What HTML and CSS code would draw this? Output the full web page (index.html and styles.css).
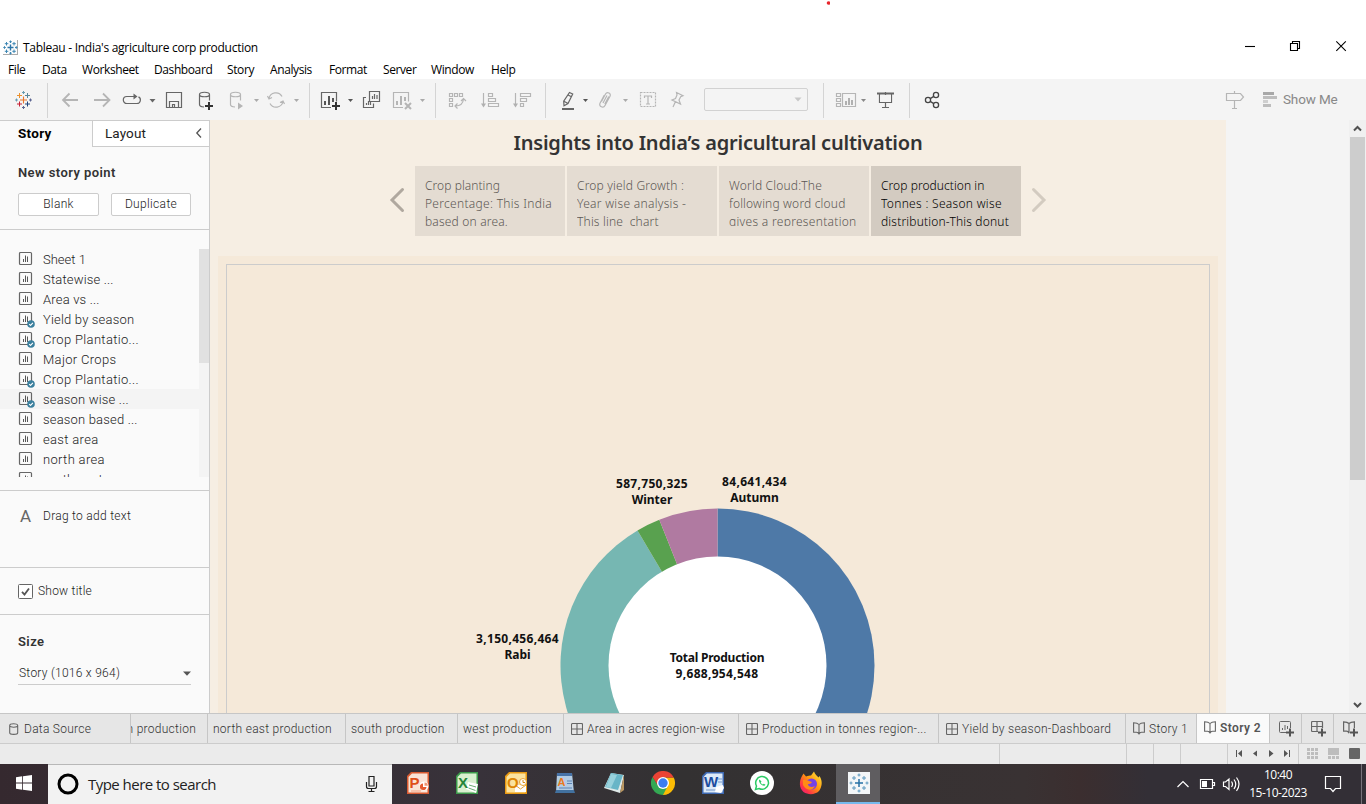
FILE: index.html
```html
<!DOCTYPE html>
<html lang="en">
<head>
<meta charset="utf-8">
<title>Tableau - India's agriculture corp production</title>
<link rel="stylesheet" href="styles.css">
</head>
<body>
<svg class="defs" width="0" height="0" aria-hidden="true">
  <defs>
    <symbol id="sheet" viewBox="0 0 16 16"><rect x="1.5" y="1.5" width="12" height="12" rx="1" fill="none" stroke="#666" stroke-width="1.2"/><path d="M5.500 11V8M7.500 11V4.500M9.500 11V5.500" stroke="#555"/></symbol>
    <symbol id="check" viewBox="0 0 8 8"><circle cx="4" cy="4" r="3.8" fill="#3a7f9d"/><path d="M2.200 4.100 3.500 5.400 5.900 2.800" fill="none" stroke="#fff" stroke-width="1.100"/></symbol>
    <symbol id="grid" viewBox="0 0 12 12"><path d="M1.500.5h9a1 1 0 0 1 1 1v9a1 1 0 0 1-1 1h-9a1 1 0 0 1-1-1v-9a1 1 0 0 1 1-1ZM6 .5v11M.5 6h11" fill="none" stroke="#666" stroke-width="1.100"/></symbol>
    <symbol id="book" viewBox="0 0 12 13"><path d="M6 2.500v10M6 2.500C4.800 1.200 3 .8.600.800v9.400H3.500C4.800 10.200 5.600 11 6 12.200M6 2.500C7.200 1.200 9 .8 11.400.800v9.400H8.500C7.200 10.200 6.400 11 6 12.200" fill="none" stroke="#666" stroke-width="1.100"/></symbol>
  </defs>
</svg>
<div class="app">
  <div class="blank"><svg class="dot" viewBox="0 0 4 4"><circle cx="2.500" cy="2" r="1.800" fill="#e8262c"/></svg></div>
  <header class="titlebar">
    <svg class="w23" viewBox="0 38 23 20"><rect x="3" y="40" width="15" height="15" fill="#fdfdfd"/><path d="M17.500 40v15M3 54.500h15" stroke="#aaa"/><path d="M10.500 44.500v6M7.500 47.500h6" stroke="#2c75a8" stroke-width="1.400"/><path d="M6.500 42v3.500M4.800 43.700h3.500M14 42v3.500M12.300 43.700h3.500M6.500 49.500V53M4.800 51.300h3.500M14 49.500V53M12.300 51.300h3.500M10.500 40.500v2.500M9.300 41.700h2.500M10.500 52v2.500M9.300 53.200h2.500M4.500 46.200v2.600M3.300 47.500h2.500M16.300 46.200v2.600M15 47.500h2.500" stroke="#3c86b3"/></svg>
    <span class="title-text">Tableau - India's agriculture corp production</span>
    <svg class="winbtns" viewBox="1226 38 140 20"><g fill="none" stroke="#000" stroke-width="1.100"><path d="M1245 46.500h10"/><path d="M1290.500 43.500h7v7h-7zM1292.500 43.500v-2h7v7h-2"/><path d="M1336.300 41.300l9.500 9.500M1345.800 41.300l-9.500 9.500"/></g></svg>
  </header>
  <nav class="menu">
    <span class="m1">File</span><span class="m2">Data</span><span class="m3">Worksheet</span><span class="m4">Dashboard</span><span class="m5">Story</span><span class="m6">Analysis</span><span class="m7">Format</span><span class="m8">Server</span><span class="m9">Window</span><span class="m10">Help</span>
  </nav>
  <div class="toolbar">
    <svg class="w48" viewBox="0 79 48 41"><path d="M23.500 96.500v7M20 100h7" stroke="#e8762d" stroke-width="1.100"/><path d="M27.500 93v5M25 95.500h5" stroke="#59879b"/><path d="M19.500 93v5M17 95.500h5" stroke="#eb912c"/><path d="M19.500 101.500v5M17 104h5" stroke="#c72035"/><path d="M27.500 101.500v5M25 104h5" stroke="#1f457e"/><path d="M23.500 91v3M22 92.500h3M16.500 98.500v3M15 100h3" stroke="#6a9db0"/><path d="M23.500 106v3M22 107.500h3M30.500 98.500v3M29 100h3" stroke="#5b6591"/><path d="M47.500 83v35" stroke="#d4d4d4"/></svg>
    <svg class="w38" viewBox="48 79 38 41"><path d="M78 100H63M69.500 93.500 63 100l6.500 6.500" class="off thick"/></svg>
    <svg class="w32" viewBox="86 79 32 41"><path d="M94 100h15.500M103 93.500l6.500 6.500-6.500 6.500" class="off thick"/></svg>
    <svg class="w42" viewBox="118 79 42 41"><path d="M130 103.500h-3.200a3.500 3.500 0 0 1 0-7H136M135 103.500h2a3.500 3.500 0 0 0 1.500-6.600M128 103.500h9" class="on"/><path d="M133.500 93.500v6l4-3z" fill="#666"/><path d="M149.500 99h6l-3 3.500z" fill="#666"/></svg>
    <svg class="w30" viewBox="160 79 30 41"><path d="M166.500 92.500h15v15h-15zM169.500 107.500v-6h9v6M172.500 107.500v-3h2v3" class="on"/></svg>
    <svg class="w32" viewBox="190 79 32 41"><path d="M199.500 94.500v10c0 1.500 2 2.400 4.500 2.500M209.500 94.500v6M199.500 94.500c0-3 10-3 10 0s-10 3-10 0" class="on"/><path d="M209 102v8M205 106h8" stroke="#333" stroke-width="2"/></svg>
    <svg class="w42" viewBox="222 79 42 41"><path d="M230.500 94.500v10c0 1.500 2 2.400 4.500 2.500M240.500 94.500v6M230.500 94.500c0-3 10-3 10 0s-10 3-10 0" class="off"/><path d="M238 102.500v7l5-3.500z" fill="#b5b5b5"/><path d="M254 99h5l-2.500 3z" fill="#aaa"/></svg>
    <svg class="w46" viewBox="264 79 46 41"><path d="M269 98.500a7 7 0 0 1 13-2M283 101.500a7 7 0 0 1-13 2M267.500 96l1.500 3 3-1.500M284.500 104l-1.500-3-3 1.500" class="off"/><path d="M294 99h5l-2.500 3z" fill="#aaa"/><path d="M309.500 83v35" stroke="#d4d4d4"/></svg>
    <svg class="w48" viewBox="310 79 48 41"><path d="M331 107.500h-9.500v-15h15v9" class="on"/><path d="M325 105v-4M329 105v-9M333 102v-4" stroke="#555" stroke-width="2"/><path d="M336 102v8M332 106h8" stroke="#333" stroke-width="2"/><path d="M348 99h5l-2.500 3z" fill="#555"/></svg>
    <svg class="w30" viewBox="358 79 30 41"><path d="M369.500 91.500h10v10h-10zM366 97.500h-2.500v10h10v-4M372.500 99v-3M374.500 99v-5M377 99v-4M366.500 105v-2M368.500 105v-4M370.500 105v-3" class="on"/></svg>
    <svg class="w48" viewBox="388 79 48 41"><path d="M403 107.500h-9.500v-15h15v9" class="off"/><path d="M397 105v-4M401 105v-9M405 101v-4M405 103l6 6M411 103l-6 6" stroke="#b5b5b5" stroke-width="2"/><path d="M420 99h5l-2.500 3z" fill="#aaa"/><path d="M435.500 83v35" stroke="#d4d4d4"/></svg>
    <svg class="w38" viewBox="436 79 38 41"><path d="M449.500 93.500h3v3h-3zM454.500 93.500h3v3h-3zM459.500 93.500h3v3h-3zM449.500 98.500h3v3h-3zM449.500 103.500h3v3h-3zM455.500 106c5 0 7.500-2 8-7M461 101l2.500-2.500 2.500 2.500M457.500 103.500 455 106l2.500 2.500" class="off"/></svg>
    <svg class="w34" viewBox="474 79 34 41"><path d="M483.500 93v13M488.500 93.500h4v3h-4zM488.500 98.500h7v3h-7zM488.500 103.500h10v3h-10z" class="off"/><path d="M481 103.500h5l-2.500 4z" fill="#b0b0b0"/></svg>
    <svg class="w38" viewBox="508 79 38 41"><path d="M515.500 93v13M520.500 93.500h10v3h-10zM520.500 98.500h6v3h-6zM520.500 103.500h3v3h-3z" class="off"/><path d="M513 103.500h5l-2.500 4z" fill="#b0b0b0"/><path d="M545.500 83v35" stroke="#d4d4d4"/></svg>
    <svg class="w48" viewBox="546 79 48 41"><path d="M569.500 92.500l3.200 1.500-4.700 9.500-4 2.200-.3-4.500zM563.800 101.200l3.900 2M568 95l3.500 1.800" class="on"/><path d="M562 109h12" stroke="#666" stroke-width="2"/><path d="M583 99h5l-2.500 3z" fill="#555"/></svg>
    <svg class="w40" viewBox="594 79 40 41"><path d="M601.500 101.500l4-7.500c1.500-2.500 6-1 4.500 2.200l-5 9.300c-1.600 3-6.500 1-5-2.200l4.200-8M603 103l4-7.500M604.800 104l4-7.500" class="off"/><path d="M623 99h5l-2.500 3z" fill="#aaa"/></svg>
    <svg class="w30" viewBox="634 79 30 41"><rect x="640.500" y="92.500" width="15" height="14" class="off" stroke-dasharray="2 1"/><path d="M644.500 98v-2h7v2M648 96v8M646 104h4" class="off"/></svg>
    <svg class="w40" viewBox="664 79 40 41"><path d="M676.500 92.500l6.500 3.200-2.300 1-1.700 3.300 1.500 4-8.500-4 3.500-1.500 1.500-3.500zM675.500 101.500l-2.500 5.500" class="off"/></svg>
    <div class="combo"><svg viewBox="0 0 8 5" width="8" height="5"><path d="M.500.500h7L4 4.500z" fill="#c8c8c8"/></svg></div>
    <svg class="w64" viewBox="808 79 64 41"><path d="M823.500 83v35" stroke="#d4d4d4"/><path d="M836.500 93.500h4v3h-4zM836.500 98.500h4v3h-4zM836.500 103.500h4v3h-4zM842.500 93.500h13v13h-13z" class="off"/><path d="M846 105v-4M849 105v-7M852 105v-5" stroke="#b0b0b0" stroke-width="2"/><path d="M861 99h5l-2.500 3z" fill="#888"/></svg>
    <svg class="w38" viewBox="872 79 38 41"><path d="M877 93.500h17" stroke="#666" stroke-width="2"/><path d="M879.500 94v8.500h12V94M885.500 92v16M882 107.500h7" class="on"/><path d="M880 95h11v7h-11z" fill="#f4f4f4"/><path d="M909.500 83v35" stroke="#d4d4d4"/></svg>
    <svg class="w48" viewBox="910 79 48 41"><g fill="none" stroke="#444" stroke-width="1.300"><circle cx="928" cy="100" r="2.600"/><circle cx="936" cy="95" r="2.600"/><circle cx="936" cy="105" r="2.600"/><path d="M930.200 98.600l3.600-2.200M930.200 101.400l3.600 2.200"/></g></svg>
    <svg class="guide" viewBox="1220 79 62 41"><path d="M1226.500 93.500h14l3 3.500-3 3.500h-14zM1234.500 91v2M1234.500 100.500v8M1232 108.500h5" class="off"/><path d="M1263 92h11v3h-11z" fill="#a8a8a8"/><path d="M1263 96h14v3h-14z" fill="#bdbdbd"/><path d="M1263 100h5v3h-5z" fill="#cfcfcf"/><path d="M1263 104h8v3h-8z" fill="#bdbdbd"/></svg>
    <span class="showme">Show Me</span>
  </div>
  <main class="work">
    <aside class="side">
      <div class="sidetabs"><div class="stab active"><span>Story</span></div><div class="stab other"><span>Layout</span><svg width="8" height="11" viewBox="0 0 8 11"><path d="M6 .500 1.800 5 6 9.500" fill="none" stroke="#555" stroke-width="1.300"/></svg></div></div>
      <section class="newpoint"><h2>New story point</h2><div class="btns"><span class="btn">Blank</span><span class="btn dup">Duplicate</span></div></section>
      <section class="sheets">
        <ul>
          <li><i><svg width="16" height="16"><use href="#sheet"/></svg></i><span class="tight">Sheet 1</span></li>
          <li><i><svg width="16" height="16"><use href="#sheet"/></svg></i><span>Statewise ...</span></li>
          <li><i><svg width="16" height="16"><use href="#sheet"/></svg></i><span>Area vs ...</span></li>
          <li><i><svg width="16" height="16"><use href="#sheet"/></svg><svg class="badge"><use href="#check"/></svg></i><span>Yield by season</span></li>
          <li><i><svg width="16" height="16"><use href="#sheet"/></svg><svg class="badge"><use href="#check"/></svg></i><span class="wide">Crop Plantatio...</span></li>
          <li><i><svg width="16" height="16"><use href="#sheet"/></svg></i><span class="wide">Major Crops</span></li>
          <li><i><svg width="16" height="16"><use href="#sheet"/></svg><svg class="badge"><use href="#check"/></svg></i><span class="wide">Crop Plantatio...</span></li>
          <li class="hl"><i><svg width="16" height="16"><use href="#sheet"/></svg><svg class="badge"><use href="#check"/></svg></i><span>season wise ...</span></li>
          <li><i><svg width="16" height="16"><use href="#sheet"/></svg></i><span>season based ...</span></li>
          <li><i><svg width="16" height="16"><use href="#sheet"/></svg></i><span class="wide">east area</span></li>
          <li><i><svg width="16" height="16"><use href="#sheet"/></svg></i><span class="wide">north area</span></li>
          <li><i><svg width="16" height="16"><use href="#sheet"/></svg></i><span>north east</span></li>
        </ul>
        <div class="track"><div class="thumb"></div></div>
      </section>
      <section class="drag"><b>A</b><span>Drag to add text</span></section>
      <section class="showtitle"><svg width="15" height="15" viewBox="0 0 15 15"><rect x=".5" y=".5" width="14" height="14" rx="1" fill="#fff" stroke="#666"/><path d="M4 7.800 6.500 10.500 11 4.500" fill="none" stroke="#555" stroke-width="1.800"/></svg><span>Show title</span></section>
      <section class="size"><h2>Size</h2><div class="select"><span>Story (1016 x 964)</span><svg width="8" height="5" viewBox="0 0 8 5"><path d="M0 .500h8L4 4.800z" fill="#555"/></svg></div></section>
    </aside>
    <div class="story">
      <h1>Insights into India’s agricultural cultivation</h1>
      <div class="points">
        <svg class="arrow" width="16" height="26" viewBox="0 0 16 26"><path d="M13.500 2.500 3 13l10.500 10.500" fill="none" stroke="#b0a89f" stroke-width="3" stroke-linecap="round"/></svg>
        <div class="card"><p><span class="s1">Crop planting</span><br><span class="s3">Percentage: This India</span><br><span class="s2">based on area.</span></p></div>
        <div class="card"><p><span class="s2">Crop yield Growth :</span><br><span class="s3">Year wise analysis -</span><br><span class="s2">This line&nbsp; chart</span></p></div>
        <div class="card"><p><span class="s2">World Cloud:The</span><br><span class="s2">following word cloud</span><br><span class="s3">gives a representation</span></p></div>
        <div class="card current"><p><span class="s1">Crop production in</span><br><span class="s3">Tonnes : Season wise</span><br><span class="s2">distribution-This donut</span></p></div>
        <svg class="arrow" width="16" height="26" viewBox="0 0 16 26"><path d="M2.500 2.500 13 13 2.500 23.500" fill="none" stroke="#d3cbc0" stroke-width="3" stroke-linecap="round"/></svg>
      </div>
      <div class="dash"><div class="view">
        <svg class="chart" viewBox="227 265 982 448">
          <path d="M717.500 508.500a157 157 0 0 1 0 314z" fill="#4e79a7"/>
          <path d="M717.500 665.500V822.500A157 157 0 0 1 637.500 530.400z" fill="#76b7b2"/>
          <path d="M717.500 665.500 637.500 530.400A157 157 0 0 1 659.300 519.700z" fill="#59a14f"/>
          <path d="M717.500 665.500 659.300 519.700A157 157 0 0 1 717.500 508.500z" fill="#b07aa1"/>
          <circle cx="717.500" cy="665.500" r="109" fill="#fff"/>
          <g class="labels"><text x="652" y="488" class="num">587,750,325</text><text x="652" y="504">Winter</text><text x="754.500" y="486" class="num">84,641,434</text><text x="754.500" y="502">Autumn</text><text x="517.500" y="643" class="num">3,150,456,464</text><text x="517.500" y="659">Rabi</text><text x="717" y="662" class="total">Total Production</text><text x="717" y="678" class="num">9,688,954,548</text></g>
        </svg>
      </div></div>
    </div>
    <div class="gutter"></div>
    <div class="vscroll"><svg width="17" height="17" viewBox="0 0 17 17"><path d="M5 10.500 8.500 7l3.500 3.500" fill="none" stroke="#505050" stroke-width="2"/></svg><div class="vthumb"></div><svg class="down" width="17" height="17" viewBox="0 0 17 17"><path d="M5 7l3.500 3.500L12 7" fill="none" stroke="#505050" stroke-width="2"/></svg></div>
  </main>
  <nav class="tabs">
    <div class="tab x1"><svg width="10" height="12" viewBox="0 0 10 12"><path d="M.700 2.500v7.200c0 2.200 8 2.200 8 0V2.500c0-2.400-8-2.400-8 0s8 2.200 8 0" fill="none" stroke="#666" stroke-width="1.100"/></svg><span>Data Source</span></div>
    <div class="tab x2"><span>north production</span></div>
    <div class="tab x3"><span>north east production</span></div>
    <div class="tab x4"><span>south production</span></div>
    <div class="tab x5"><span>west production</span></div>
    <div class="tab x6"><svg width="12" height="12"><use href="#grid"/></svg><span>Area in acres region-wise</span></div>
    <div class="tab x7"><svg width="12" height="12"><use href="#grid"/></svg><span>Production in tonnes region-...</span></div>
    <div class="tab x8"><svg width="12" height="12"><use href="#grid"/></svg><span>Yield by season-Dashboard</span></div>
    <div class="tab x9"><svg width="12" height="13"><use href="#book"/></svg><span>Story 1</span></div>
    <div class="tab x10"><svg width="12" height="13"><use href="#book"/></svg><span>Story 2</span></div>
    <div class="tab add"><svg width="16" height="16" viewBox="0 0 16 16"><path d="M8 11.500H1.500a1 1 0 0 1-1-1v-9a1 1 0 0 1 1-1h9a1 1 0 0 1 1 1V7M3.500 9V7M6 9V4M8.500 8V5" fill="none" stroke="#666"/><path d="M11 7.500v8M7 11.500h8" stroke="#555" stroke-width="2"/></svg></div>
    <div class="tab add"><svg width="16" height="16" viewBox="0 0 16 16"><path d="M7 10.500H1.500a1 1 0 0 1-1-1v-8a1 1 0 0 1 1-1h9a1 1 0 0 1 1 1V7M6 .5v10M.5 5.500h11" fill="none" stroke="#666" stroke-width="1.200"/><path d="M11 7.500v8M7 11.500h8" stroke="#555" stroke-width="2"/></svg></div>
    <div class="tab add last"><svg width="16" height="16" viewBox="0 0 16 16"><path d="M6 2.500v9.500M6 2.500C4.800 1.200 3 .8.600.800v9.400H3.500C4.800 10.200 5.600 11 6 12.200M6 2.500C7.200 1.200 9 .8 11.400.800V7" fill="none" stroke="#666" stroke-width="1.200"/><path d="M11 7.500v8M7 11.500h8" stroke="#555" stroke-width="2"/></svg></div>
  </nav>
  <div class="status">
    <svg class="statusicons" viewBox="996 744 370 20"><path d="M999.500 744v20M1126.500 744v20M1153.500 744v20M1180.500 744v20M1227.500 744v20M1298.500 744v20" stroke="#ccc"/><g fill="#555"><path d="M1236 750h1v7h-1zM1242 750v7l-4-3.500zM1257 750.500v6l-4-3zM1269 750v7l4.500-3.500zM1284 750v7l4-3.500zM1289 750h1v7h-1z"/></g><g fill="#bdbdbd"><path d="M1307 748h3v3h-3zM1311 748h3v3h-3zM1315 748h3v3h-3zM1307 752h3v3h-3zM1311 752h3v3h-3zM1315 752h3v3h-3zM1307 756h3v3h-3zM1311 756h3v3h-3zM1315 756h3v3h-3zM1328 748h11v7h-11zM1328 756h3v3h-3zM1332 756h3v3h-3zM1336 756h3v3h-3z"/></g><rect x="1349" y="748" width="11" height="11" rx="1" fill="#666"/></svg>
  </div>
  <footer class="taskbar">
    <svg class="w48" viewBox="0 764 48 40"><path d="M16 777.200 22.200 776.300V782.500H16zM23 776.200 32 775V782.500H23zM16 783.400H22.200V789.700L16 788.800zM23 783.400H32V791L23 789.800z" fill="#fff"/></svg>
    <div class="search">
      <svg class="w40" viewBox="48 764 40 40"><circle cx="68" cy="784" r="9" fill="none" stroke="#000" stroke-width="3"/></svg><span class="query">Type here to search</span>
      <svg class="mic" viewBox="364 764 16 40"><path d="M369 776.500h5v9.500h-5zM366.500 782v4.500a2 2 0 0 0 2 2h6a2 2 0 0 0 2-2V782M371.500 788.500v3M368.500 791.500h6" fill="none" stroke="#222" stroke-width="1.200"/></svg>
    </div>
    <div class="apps">
      <svg viewBox="0 0 24 24"><path d="M1 5 5 1h18v22H1z" fill="#d95a31"/><path d="M2.500 6 6 2.500h15.500v19h-19z" fill="#fae3d6"/><circle cx="18" cy="15" r="4.500" fill="#fff"/><path d="M17 12.500a3.300 3.300 0 1 0 3.500 3.500H17z" fill="#e55b31"/><path d="M18.500 11.500a3.300 3.300 0 0 1 3.300 3.300h-3.300z" fill="#f09472"/><path d="M5 20h10" stroke="#f0a184"/><text x="3.500" y="16.500" class="glyph" fill="#df4f19">P</text></svg>
      <svg viewBox="0 0 24 24"><path d="M1 5 5 1h18v22H1z" fill="#3c9a4b"/><path d="M2.500 6 6 2.500h15.500v19h-19z" fill="#d9f0cf"/><path d="M13 11l10 2-2 9-10-4z" fill="#fff"/><path d="M14 14l7 2M13.500 17l7 2.500" stroke="#69ac72"/><text x="3" y="16.500" class="glyph" fill="#26853a">X</text></svg>
      <svg viewBox="0 0 24 24"><path d="M1 5 5 1h18v22H1z" fill="#e99a13"/><path d="M2.500 6 6 2.500h15.500v19h-19z" fill="#fbe3a0"/><path d="M11 14h11v7H11z" fill="#fff"/><path d="M11 14l5.500 4 5.500-4" fill="none" stroke="#e9a633"/><circle cx="19" cy="11" r="3.500" fill="#fff" stroke="#e9a633"/><path d="M19 9v2.500h2" fill="none" stroke="#d68d17"/><text x="3" y="16.500" class="glyph" fill="#de8705">O</text></svg>
      <svg viewBox="0 0 24 24"><path d="M4 2h15l2 20H3z" fill="#b3cce4"/><path d="M4 2h15v3H4z" fill="#4773a8"/><path d="M3 19h18l1 3H2z" fill="#42719f"/><path d="M14 10h5M14 12.500h5M6 17h13" stroke="#5c83b5"/><text x="4.500" y="15" class="small" fill="#e97920">A</text></svg>
      <svg viewBox="0 0 24 24"><path d="M9 2l13 2-4 18L2 17z" fill="#dfe9e8"/><path d="M9 2l12 2-5 15L3 16z" fill="#68b5c7"/><path d="M9 3l6 1-6 13-5-1z" fill="#98d1dc"/><path d="M22 4v15l-4 3z" fill="#b99762"/></svg>
      <svg viewBox="0 0 24 24"><path d="M12 12V6.500h10.700A12 12 0 0 1 12 24z" fill="#fbbc05"/><path d="M1.600 6A12 12 0 0 0 12 24l4.800-9.200L7 14.500z" fill="#34a853"/><path d="M1.600 6A12 12 0 0 1 22.700 6.500H12L7 14.500z" fill="#ea4335"/><circle cx="12" cy="12" r="6" fill="#fff"/><circle cx="12" cy="12" r="4.700" fill="#3a7df0"/></svg>
      <svg viewBox="0 0 24 24"><path d="M1 5 5 1h18v22H1z" fill="#3d68b2"/><path d="M2.500 6 6 2.500h15.500v19h-19z" fill="#dceaf8"/><path d="M17 8h4M17 11h4M5 19h11" stroke="#7596c9"/><path d="M15 16l7-2 1 3-3 5-6-1z" fill="#fff"/><text x="3" y="15.500" class="glyph" fill="#1c4d9f">W</text></svg>
      <svg viewBox="0 0 24 24"><circle cx="12" cy="12" r="12" fill="#fff"/><path d="M5.500 18.500l1-3.500a6.400 6.400 0 1 1 2.500 2.500z" fill="none" stroke="#2ccb65" stroke-width="1.500"/><path d="M9.500 8.500c-1.500 1.500.5 4 2 5.200 1.500 1.200 3.500 1.500 4 0l-1.700-1-1 .9c-1-.4-1.700-1.100-2.100-2.100l.8-.9z" fill="#2ccb65"/></svg>
      <svg viewBox="0 0 24 24"><defs><linearGradient id="fx" x1="1" y1="0" x2="0" y2="1"><stop offset="0" stop-color="#fff044"/><stop offset=".45" stop-color="#ff980e"/><stop offset=".75" stop-color="#ff3647"/><stop offset="1" stop-color="#e31587"/></linearGradient></defs><path d="M3 5l1.500-2.500L7 5.500C9 4.500 11 4.500 12 4.500L15 .5c1 3 3 4 4.500 6L20.500 5C24 10 23 16 20 20c-4 4-11 4-15.500 1C0 17 0 10 3 5z" fill="url(#fx)"/><circle cx="12.500" cy="13" r="5.500" fill="#7542e5"/><path d="M4 9c3-1 5 1 9 2-1 2-3 2-4 2 0 3 4 4 7 2-2 5-9 5-12-1z" fill="#ff8b16"/></svg>
      <div class="current-app"><svg viewBox="0 0 24 24"><path d="M1 1h22v22H1z" fill="#f3f6f8"/><path d="M12 8v8M8 12h8" stroke="#2670a5" stroke-width="1.500"/><path d="M7 5v4M5 7h4M17 5v4M15 7h4M7 15v4M5 17h4M17 15v4M15 17h4M12 2.500v3M10.500 4h3M12 18.500v3M10.500 20h3M4 10.500v3M2.500 12h3M20 10.500v3M18.500 12h3" stroke="#5d98be"/></svg></div>
    </div>
    <div class="tray">
      <svg viewBox="1170 764 72 40" class="w72"><g fill="none" stroke="#fff" stroke-width="1.200"><path d="M1177.500 787l5.500-5.500 5.500 5.500"/><path d="M1200.500 779.500h12v9h-12z"/><path d="M1213 782.500h1.500v3h-1.500"/><path d="M1223.500 782v4.500h2l3.500 3v-10.500l-3.500 3zM1231.500 781.500q2 2.700 0 5.500M1234 779.500q3.500 4.700 0 9.500M1236.500 777.500q5 6.500 0 13.500"/></g><path d="M1202 781h5v6h-5z" fill="#fff"/></svg>
      <div class="clock"><span>10:40</span><span>15-10-2023</span></div>
      <svg viewBox="1314 764 52 40" class="w52"><path d="M1325.500 776.500h15v12h-5l-2.500 3-2.500-3h-5z" fill="none" stroke="#fff" stroke-width="1.200"/><path d="M1361.500 764v40" stroke="#77727a"/></svg>
    </div>
  </footer>
</div>
</body>
</html>
```
FILE: styles.css
```css
* { box-sizing: border-box; }
body { margin: 0; background: #fff; font-family: "Open Sans", "Noto Sans", sans-serif; color: #333; }
svg { display: block; flex: none; }
h1, h2, p, ul { margin: 0; padding: 0; font-size: inherit; }
.defs { position: absolute; }
.app { width: 1366px; height: 804px; display: flex; flex-direction: column; overflow: hidden; }
.blank { height: 38px; padding: 1px 0 0 826px; }
.dot { width: 4px; height: 4px; }
.titlebar { height: 20px; display: flex; align-items: center; font-size: 12px; color: #000; }
.title-text { letter-spacing: -0.28px; padding-bottom: 1px; }
.w23 { width: 23px; height: 20px; }
.winbtns { width: 140px; height: 20px; margin-left: auto; }
.menu { height: 21px; display: flex; align-items: center; padding: 2px 0 0 8px; font-size: 12px; letter-spacing: -0.4px; color: #000; }
.m1 { width: 34px; } .m2 { width: 40px; } .m3 { width: 72px; } .m4 { width: 73px; } .m5 { width: 43px; }
.m6 { width: 59px; } .m7 { width: 54px; } .m8 { width: 48px; } .m9 { width: 60px; } .m10 { width: 30px; }

.toolbar { height: 41px; background: #f4f4f4; display: flex; align-items: center; }
.toolbar svg { height: 41px; }
.on { fill: none; stroke: #666; stroke-width: 1.2; }
.off { fill: none; stroke: #b5b5b5; stroke-width: 1.2; }
.thick { stroke-width: 1.8; }
.w30 { width: 30px; } .w32 { width: 32px; } .w34 { width: 34px; } .w38 { width: 38px; }
.w40 { width: 40px; } .w42 { width: 42px; } .w46 { width: 46px; } .w48 { width: 48px; }
.w52 { width: 52px; } .w64 { width: 64px; } .w72 { width: 72px; }
.combo { width: 104px; height: 23px; border: 1px solid #d2d2d2; border-radius: 2px; display: flex; align-items: center; justify-content: flex-end; padding-right: 5px; }
.toolbar .combo svg { height: 5px; }
.guide { width: 62px; margin-left: auto; }
.showme { width: 84px; padding: 0 0 1px 1px; font: 13.5px Roboto, sans-serif; letter-spacing: -0.15px; color: #888; }

.work { height: 593px; display: flex; background: #f4f4f4; }
.side { width: 210px; background: #fafafa; border-right: 1px solid #ccc; border-top: 1px solid #ccc; font-family: Roboto, sans-serif; font-size: 13px; font-weight: 300; letter-spacing: 0.18px; color: #222; display: flex; flex-direction: column; }
.sidetabs { height: 26px; display: flex; }
.stab { display: flex; align-items: center; padding-bottom: 2px; }
.active { width: 92px; padding-left: 18px; font-weight: 700; font-size: 13.5px; letter-spacing: 0.3px; color: #000; }
.other { flex: 1; border-left: 1px solid #ccc; border-bottom: 1px solid #ccc; background: #fff; padding: 0 6px 1px 12px; justify-content: space-between; font-weight: 400; font-size: 13.5px; letter-spacing: 0.1px; }
.side h2 { font-size: 13px; font-weight: 600; color: #333; line-height: 16px; letter-spacing: 0.42px; }
.newpoint { height: 83px; padding: 18px 18px 0; border-bottom: 1px solid #ccc; }
.btns { display: flex; gap: 12px; margin-top: 12px; }
.btn { width: 81px; height: 23px; border: 1px solid #ccc; border-radius: 2px; background: #fff; display: flex; align-items: center; justify-content: center; padding-bottom: 1px; font-size: 12px; letter-spacing: 0.34px; }
.dup { width: 80px; }
.sheets { height: 261px; padding: 19px 0 13px; border-bottom: 1px solid #ccc; display: flex; }
.sheets ul { flex: 1; list-style: none; overflow: hidden; height: 228px; }
.sheets li { height: 20px; display: flex; align-items: center; padding-left: 18px; white-space: nowrap; }
.sheets i { width: 25px; height: 16px; position: relative; }
.tight { letter-spacing: 0; }
.wide { letter-spacing: 0.33px; }
.badge { position: absolute; left: 9px; top: 9px; width: 8px; height: 8px; }
.hl { background: #f4f4f4; }
.track { width: 10px; height: 228px; background: #f4f4f4; }
.thumb { height: 114px; background: #e1e1e1; }
.drag { height: 77px; border-bottom: 1px solid #ccc; padding: 15px 0 0 20px; display: flex; font-size: 12px; line-height: 20px; letter-spacing: 0.28px; }
.drag b { width: 23px; font-size: 17px; font-weight: 400; color: #666; }
.showtitle { height: 47px; border-bottom: 1px solid #ccc; display: flex; align-items: center; padding-left: 18px; gap: 5px; font-size: 12px; letter-spacing: 0.23px; }
.size { padding: 19px 18px 0; }
.select { height: 25px; margin-top: 10px; padding-top: 2px; border-bottom: 1px solid #ccc; display: flex; align-items: center; justify-content: space-between; padding-left: 1px; font-size: 12px; letter-spacing: 0.26px; }

.story { width: 1016px; background: #f6eee3; display: flex; flex-direction: column; font-family: "Noto Sans", sans-serif; }
h1 { height: 46px; padding-top: 8px; font-size: 20px; line-height: 30px; font-weight: 600; letter-spacing: -0.22px; text-align: center; color: #333; }
.points { height: 90px; display: flex; justify-content: center; gap: 2px; }
.arrow { margin: 21px 8px 0; }
.card { width: 150px; height: 70px; background: #e4dcd2; padding: 11px 0 0 10px; }
.card p { height: 49px; overflow: hidden; font-size: 12px; line-height: 18px; font-weight: 300; color: #5c5854; white-space: nowrap; }
.s1 { letter-spacing: 0.06px; }
.s2 { letter-spacing: 0.18px; }
.s3 { letter-spacing: 0.3px; }
.current { background: #d3cbc1; }
.current p { color: #000; font-weight: 350; }
.dash { flex: 1; margin: 0 8px; background: #f5e9d9; padding: 8px 8px 0; }
.view { height: 449px; border: 1px solid #ccc; border-bottom: 0; }
.chart { width: 982px; height: 448px; }
.labels text { font: 700 12px "Noto Sans", sans-serif; text-anchor: middle; fill: #111; }
.labels .num { letter-spacing: 0.3px; }
.labels .total { letter-spacing: -0.25px; }
.gutter { width: 123px; }
.vscroll { width: 17px; background: #f0f0f0; display: flex; flex-direction: column; }
.vthumb { height: 343px; margin: 0 1px; background: #cdcdcd; }
.down { margin-top: auto; }

.tabs { height: 31px; border-top: 1px solid #c6c6c6; border-bottom: 1px solid #ccc; background: #e6e6e6; display: flex; font-family: Roboto, sans-serif; font-size: 12px; font-weight: 300; letter-spacing: 0.27px; color: #333; }
.tab { border-right: 1px solid #c6c6c6; display: flex; align-items: center; padding-left: 5px; white-space: nowrap; }
.x1 { width: 131px; padding-left: 9px; gap: 5px; }
.x2 { width: 77px; justify-content: flex-end; padding-right: 11px; padding-left: 0; overflow: hidden; }
.x3 { width: 138px; } .x4 { width: 112px; } .x5 { width: 106px; }
.x6 { width: 175px; } .x7 { width: 200px; } .x8 { width: 187px; }
.x6, .x7, .x8, .x9, .x10 { padding-left: 7px; gap: 4px; }
.x9 { width: 71px; }
.x10 { width: 73px; background: #fafafa; font-weight: 600; letter-spacing: 0.4px; color: #555; padding-bottom: 2px; }
.add { width: 32px; padding-left: 9px; }
.last { border-right: 0; }

.status { height: 20px; background: #ebebeb; }
.statusicons { width: 370px; height: 20px; margin-left: auto; }
.taskbar { height: 40px; display: flex; background: linear-gradient(90deg, #35292f, #38323a 35%, #333132 50%, #393233 75%, #3b2e2f 79%, #332f36 84%, #332f36); }
.taskbar svg { height: 40px; }
.search { width: 344px; background: #f2f2f2; border-top: 1px solid #b8b8b8; display: flex; align-items: center; padding-bottom: 1px; font-size: 15px; color: #222; }
.query { letter-spacing: -0.53px; }
.mic { width: 16px; margin-left: auto; margin-right: 12px; }
.apps { display: flex; align-items: center; padding-left: 14px; gap: 25.100px; }
.apps svg { width: 24px; height: 24px; margin-top: -2px; }
.glyph { font: 700 15px "Liberation Sans", sans-serif; }
.small { font: 700 11px "Liberation Sans", sans-serif; }
.current-app { width: 44px; height: 40px; margin-left: -12px; background: #5f5d60; border-bottom: 2px solid #76b9ed; display: flex; align-items: center; justify-content: center; }
.apps .current-app svg { margin: 0 0 0 2px; }
.tray { margin-left: auto; display: flex; }
.clock { width: 72px; display: flex; flex-direction: column; align-items: center; justify-content: center; font-size: 12px; line-height: 18px; letter-spacing: -0.5px; color: #fff; }
```
